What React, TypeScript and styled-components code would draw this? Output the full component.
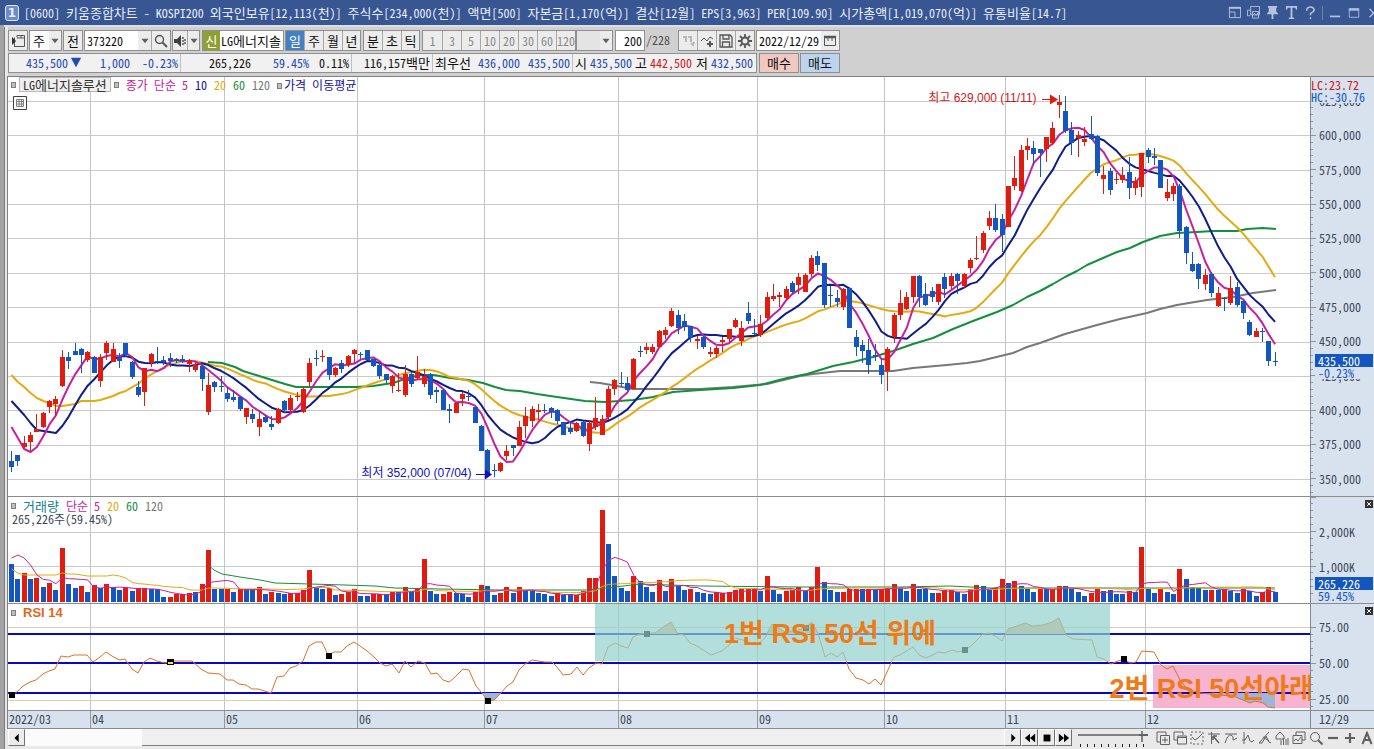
import React from "react";
import styled, { createGlobalStyle, css } from "styled-components";

const MONO = '"Noto Sans Mono CJK KR", "Noto Sans CJK KR", monospace';
const SANS = '"Liberation Sans", "Noto Sans CJK KR", sans-serif';

const RED = "#e01c10";
const BLUE = "#1456c0";
const MAGENTA = "#c8209c";
const NAVY = "#101c8c";
const AMBER = "#e4aa10";
const GREEN = "#14903c";
const GRAY = "#787878";

/* Each bar: colour, high, body top, body bottom, low */
const CANDLES = `
b451,461,467,472 b455,455,461,466 r436,443,447,448 r432,435,442,452 r414,429,432,432 r412,413,427,428 r400,401,407,413 r396,399,404,417 r350,357,386,387 b352,357,361,369
b343,351,355,355 b348,349,355,373 r351,352,360,362 b356,357,373,373 r354,357,381,387 r341,343,353,360 r343,349,362,362 b353,357,361,368 b343,343,355,357 b361,362,377,379
b381,387,395,397 r368,368,392,406 r353,354,363,367 b347,361,362,364 b356,360,362,365 b353,358,361,367 b358,359,361,363 b355,359,361,363 r359,360,364,372 r362,365,370,372
b365,366,379,391 r373,385,412,415 b381,382,387,392 b376,386,387,392 b387,393,399,402 b390,397,400,402 b396,397,409,411 r408,408,417,424 b409,414,419,423 r411,419,427,436
b415,417,422,423 b416,424,427,430 r408,409,423,424 b400,401,410,413 r395,398,410,411 r392,396,397,401 r387,389,412,413 r358,363,382,386 b350,358,359,366 r350,356,357,362
b357,357,375,380 r367,368,375,377 b360,363,369,373 r355,356,365,367 r349,350,354,363 b352,354,355,359 b350,350,360,360 b359,359,366,367 b363,365,376,379 b374,374,380,383
r375,376,386,393 r373,390,391,392 r365,374,395,397 b372,374,384,387 r356,372,378,380 r369,376,384,387 b373,374,395,399 b387,390,392,403 b389,390,410,410 b404,409,411,423
r402,403,413,413 r392,394,399,406 b390,396,397,401 b407,407,423,423 b425,426,451,451 b449,450,474,477 b464,470,471,477 r462,463,471,472 r445,451,456,460 b445,445,448,456
r421,427,446,446 r407,416,426,438 r406,409,421,427 r404,410,412,420 b404,410,411,413 b407,408,412,418 b409,410,421,424 b422,422,435,435 b421,428,432,434 r422,423,431,432
b421,422,436,437 r420,423,444,451 r397,418,427,430 r415,419,435,435 r386,389,417,420 r379,380,389,395 b372,383,384,387 b377,383,390,391 r358,359,389,389 b346,351,352,357
r343,347,350,354 r344,347,352,354 r330,331,347,347 r327,330,335,339 r308,311,326,327 b310,315,328,334 b314,321,327,331 b326,326,338,342 r336,339,341,349 b336,337,347,349
r347,352,354,357 r346,348,354,358 r337,340,342,352 r329,329,339,343 r318,320,327,328 r321,328,341,346 b302,313,321,324 b319,333,334,335 r315,324,335,337 r292,297,318,320
r284,296,299,301 r292,295,297,307 r286,289,298,300 b281,283,292,294 r273,277,285,294 r273,275,292,292 r255,258,274,277 b251,256,265,271 b263,263,305,308 b286,295,296,307
b290,298,302,307 r288,289,307,310 b287,288,328,328 b330,337,347,356 b340,345,351,363 b339,350,365,374 b344,355,357,361 b358,365,375,384 r347,349,371,391 r313,315,337,343
r290,303,315,320 r292,297,309,310 r276,276,297,303 b275,276,297,307 b283,294,305,306 b287,291,297,302 r284,284,302,305 b273,277,289,298 r273,276,286,289 b273,274,281,294
r273,274,286,288 r258,260,268,273 r236,258,259,260 r231,233,250,253 r211,218,226,230 b204,218,230,232 b214,219,235,252 r186,186,227,227 r156,178,186,190 r145,150,191,192
r138,146,150,160 b141,148,154,165 b149,149,153,177 r137,137,149,162 r122,128,143,145 r95,102,105,118 b96,111,131,133 b122,130,143,155 r131,135,138,157 r127,139,142,146
b116,134,139,140 b135,136,173,176 r166,175,179,194 b168,171,190,195 r173,179,180,184 r167,175,180,183 b157,172,188,199 r177,181,188,195 r153,153,187,197 b148,150,157,163
b148,156,158,165 b160,160,188,188 r179,192,198,201 r183,186,194,201 b184,186,231,238 b226,227,253,264 b252,264,271,272 b263,264,279,289 r269,275,284,290 b272,274,293,297
r287,293,306,307 b297,298,299,311 r276,288,303,305 b282,287,305,307 b300,301,313,319 b320,322,335,336 r328,331,337,337 b328,331,332,342 b341,341,361,366 b352,361,362,366`
  .trim()
  .split(/\s+/)
  .map((t) => {
    const [hi, top, bot, lo] = t.slice(1).split(",").map(Number);
    return { up: t[0] === "r", hi, top, bot, lo, close: t[0] === "r" ? top : bot };
  });

/* Volume bars: colour and height in thirds of a unit */
const VOLUMES = `
b113 b68 r87 b68 r71 b45 r56 b35 r161 b53 b41 r47 b29 r50 b41 r53 b44 b35 r44 b32 r41 r41 b38 b38 b14 r14 r23 r25 r27 b29
r55 r155 b38 b38 r38 b29 r38 b38 b38 r44 b25 r29 b26 b23 r26 r26 r35 r95 b41 b38 r41 b20 r23 r29 r38 b17 b17 r23 r23 b23
r29 b29 r44 b29 r41 r128 b32 b23 r23 r29 b26 b25 b14 r29 r50 b47 b20 r26 r44 b26 r44 b32 b32 b26 b23 b17 r26 b20 b23 r20
r32 r71 r73 r275 b173 b77 b41 b32 r77 b62 b44 b29 r65 b32 r68 b47 b35 r38 b29 b26 b23 r29 r26 r29 r35 r38 r38 r41 b32 r77
b35 b23 r32 r35 r46 b32 r45 r104 b59 b35 b29 r29 r38 r38 b38 r38 b35 r40 r41 r53 b41 b32 r53 b38 b38 b27 r26 r35 r35 b29
b23 r38 r50 b47 b35 r41 r68 b56 r62 b47 b38 b29 r43 b39 r38 r47 b47 b38 b29 b17 r26 r38 b32 b35 b23 b23 r32 b29 r164 b41
b26 r39 b29 b23 r98 b68 b44 b43 b35 r35 b35 r39 b32 b26 r38 b32 b17 r29 r46 b29`
  .trim()
  .split(/\s+/)
  .map((t) => ({ up: t[0] === "r", h: Number(t.slice(1)) / 3 }));

const VOL_BASE = 602;
const barX = (i: number) => 11.5 + i * 6.35;

/* Rolling mean; the seed covers the bars whose window starts before the first one shown */
const rolling = (values: number[], n: number, seed: number[]) =>
  values
    .map((_, i) => {
      const y = i < n - 1 ? seed[i] : values.slice(i - n + 1, i + 1).reduce((a, b) => a + b, 0) / n;
      return `${barX(i).toFixed(1)},${y.toFixed(1)}`;
    })
    .join(" ");

const closes = CANDLES.map((c) => c.close);
const volTops = VOLUMES.map((v) => VOL_BASE - v.h);

const MA5 = rolling(closes, 5, [427, 438, 449, 452]);
const MA10 = rolling(closes, 10, [401, 408, 415, 423, 430, 431, 432, 433, 426]);
const MA20 = rolling(closes, 20, [375, 382, 387, 393, 398, 401, 403, 406, 406, 405, 404, 401, 401, 401, 400, 398, 396, 393, 391]);
const MA60 =
  "208,362 222,363 235,367 243,371 256,375 272,380 285,384 296,387 310,387 340,387 356,387 373,386 393,383 405,379 420,375 434,375 450,378 468,380 483,383 495,387 506,390 520,391 537,394 557,397 585,401 605,402 633,400 653,397 673,392 700,390 733,388 760,385 787,378 807,374 833,366 853,362 873,357 893,351 913,344 933,338 953,329 973,321 997,312 1013,305 1027,297 1040,291 1053,284 1065,277 1077,271 1087,265 1103,258 1117,252 1130,248 1143,242 1160,236 1177,233 1197,232 1213,231 1237,231 1247,229 1263,228 1276,229";
const MA120 =
  "590,382 600,383 617,386 633,389 700,389 733,387 767,384 800,376 813,374 840,371 893,371 913,368 947,365 967,363 980,361 1013,353 1027,347 1040,343 1065,334 1097,325 1120,319 1147,313 1160,309 1177,305 1207,300 1233,297 1253,293 1276,290";

const VMA5 = rolling(volTops, 5, [558, 555, 558, 565]);
const VMA20 = rolling(volTops, 20, [569, 573, 575, 575, 575, 575, 575, 575, 573, 574, 574, 575, 576, 576, 576, 576, 575, 576, 578]);
const VMA60 =
  "208,565 214,570 222,574 240,577 260,580 275,583 310,584 345,585 375,586 395,588 440,589 500,590 590,590 615,587 640,584 700,586 800,587 900,587 950,586 990,588 1100,588 1275,588";

const RSI =
  "11,693 17,692 23,686 30,682 36,680 43,674 49,671 55,669 61,656 68,657 74,655 87,655 93,662 100,657 106,652 112,656 119,660 125,659 132,669 138,673 144,662 150,658 157,661 165,663 170,661 192,661 201,669 208,673 220,674 227,680 233,680 239,684 246,685 252,689 258,689 271,693 277,677 284,676 290,668 296,666 303,661 309,646 316,642 322,642 328,655 334,652 341,652 347,646 354,642 360,646 367,651 374,657 380,663 386,666 392,664 399,673 405,661 411,667 418,661 425,663 431,674 437,673 443,680 449,682 454,678 463,669 469,670 476,686 482,693 488,701 494,700 500,694 507,686 513,682 519,670 525,664 532,660 538,661 545,662 552,662 557,667 563,675 571,674 577,667 583,675 589,668 596,663 602,664 608,647 615,643 621,646 628,648 633,637 640,634 647,633 655,633 663,627 671,622 678,634 684,635 690,643 697,646 703,650 711,655 722,651 729,645 735,638 743,640 750,643 757,645 765,638 772,624 785,632 798,630 805,628 812,622 818,633 825,657 831,653 837,657 843,652 849,669 856,678 863,680 869,684 875,679 881,685 887,672 894,657 900,655 913,647 919,655 926,658 933,655 938,652 945,653 952,650 958,652 965,650 972,645 983,634 989,633 997,637 1002,641 1008,629 1017,626 1025,623 1033,626 1043,625 1052,622 1059,618 1066,635 1073,639 1092,640 1097,657 1104,659 1111,664 1118,661 1124,659 1130,663 1136,662 1142,651 1154,652 1161,665 1167,669 1173,666 1180,680 1187,689 1200,693 1210,694 1218,695 1233,696 1243,700 1250,703 1255,701 1263,703 1268,707 1275,708";

const MONTHS = [
  { label: "2022/03", x: 8 },
  { label: "04", x: 90 },
  { label: "05", x: 224 },
  { label: "06", x: 357 },
  { label: "07", x: 484 },
  { label: "08", x: 618 },
  { label: "09", x: 757 },
  { label: "10", x: 884 },
  { label: "11", x: 1005 },
  { label: "12", x: 1145 },
];
const PRICES = ["625,000", "600,000", "575,000", "550,000", "525,000", "500,000", "475,000", "450,000", "425,000", "400,000", "375,000", "350,000"];

const Global = createGlobalStyle`
  * { box-sizing: border-box; }
  body { margin: 0; background: #d0d0d0; }
  button, input, select { font: inherit; color: inherit; margin: 0; padding: 0; border: 0; background: none; border-radius: 0; }
  h1 { margin: 0; font: inherit; }
`;

const Window = styled.main`
  display: flex;
  flex-direction: column;
  min-height: 100vh;
  font: 12px/14px ${MONO};
  color: #101010;
  background: #d0d0d0;
`;
const Hangul = styled.span`
  font-size: 13px;
`;

const TitleBar = styled.header`
  display: flex;
  align-items: center;
  height: 25px;
  padding-left: 5px;
  background: #385692;
  color: #e8eefa;
  white-space: pre;
  overflow: hidden;
`;
const WindowNumber = styled.span`
  width: 14px;
  height: 16px;
  margin-right: 5px;
  border: 1px solid #dfe8f8;
  border-radius: 3px;
  background: #6d8cc4;
  font: bold 12px/14px "DejaVu Sans", sans-serif;
  text-align: center;
`;
const Title = styled.h1`
  flex: 1;
`;
const WindowTools = styled.div`
  display: flex;
  align-items: center;
  gap: 4px;
  margin-right: -6px;
  color: #b4c2de;
`;
const ToolButton = styled.button`
  display: flex;
  width: 15px;
  height: 15px;
  align-items: center;
  justify-content: center;
  flex: none;
`;
const Separator = styled.i`
  width: 1px;
  height: 14px;
  background: #6d86b6;
`;

const Body = styled.div`
  display: flex;
  flex-direction: column;
  flex: 1;
  border-left: 4px solid #a2a2a2;
  box-shadow: inset 1px 0 #7c7c7c, inset 4px 0 #e8e8e8;
`;

const Toolbars = styled.div`
  display: flex;
  flex-direction: column;
  flex: none;
  gap: 2px;
  height: 51px;
  padding: 3px 0 0 4px;
  border-top: 2px solid #dcdfe4;
`;
const Bar = styled.div`
  display: flex;
  flex: none;
  height: 21px;
`;
const Group = styled.div<{ $gap?: number }>`
  display: flex;
  flex: none;
  height: 21px;
  margin-right: ${(p) => p.$gap ?? 1}px;
  border: 1px solid #8f8f8f;
  background: #ececec;
`;
const Cell = styled.button<{ $w?: number; $on?: boolean; $dim?: boolean; $ko?: boolean }>`
  display: flex;
  align-items: center;
  justify-content: center;
  flex: none;
  width: ${(p) => p.$w ?? 19}px;
  font-size: ${(p) => (p.$ko ? 13 : 12)}px;
  line-height: 19px;
  color: ${(p) => (p.$on ? "#fff" : p.$dim ? "#8a8a8a" : "#101010")};
  background: ${(p) => (p.$on ? "#4580c4" : "#ececec")};
  & + & {
    border-left: 1px solid #a8a8a8;
  }
  svg {
    color: #565656;
  }
`;
const Field = styled.input<{ $w: number; $right?: boolean }>`
  width: ${(p) => p.$w}px;
  padding: 0 2px;
  background: #fff;
  text-align: ${(p) => (p.$right ? "right" : "left")};
`;
const Picker = styled.select<{ $w: number }>`
  width: ${(p) => p.$w}px;
  padding: 0 3px;
  appearance: none;
  background: #fafafa;
  font-size: 13px;
  &:disabled {
    background: #e4e4e4;
    opacity: 1;
  }
`;
const Badge = styled.span`
  width: 17px;
  background: #8ea030;
  color: #fff;
  font-size: 13px;
  line-height: 19px;
  text-align: center;
`;
const StockName = styled.span`
  width: 63px;
  padding-left: 1px;
  background: #fff;
  line-height: 19px;
  white-space: nowrap;
  overflow: hidden;
`;
const Total = styled.span`
  width: 32px;
  line-height: 20px;
  color: #505050;
`;

const Quote = styled.div`
  display: flex;
  flex: none;
  width: 749px;
  height: 20px;
  margin-right: 2px;
  border: 1px solid #8f8f8f;
  background: #f1f1f2;
  line-height: 18px;
`;
const Value = styled.span<{ $w: number; $c?: string; $line?: boolean }>`
  flex: none;
  width: ${(p) => p.$w}px;
  color: ${(p) => p.$c ?? "#101010"};
  text-align: right;
  white-space: nowrap;
  ${(p) =>
    p.$line &&
    css`
      padding-right: 2px;
      border-right: 1px solid #c0c0c4;
    `}
`;
const Order = styled.button<{ $bg: string }>`
  width: 40px;
  height: 20px;
  margin-right: 1px;
  border: 1px solid #8f8f8f;
  background: ${(p) => p.$bg};
  font-size: 13px;
`;

const Chart = styled.section`
  display: flex;
  flex-direction: column;
  flex: 1;
  margin-left: 3px;
  border-top: 1px solid #808080;
  border-left: 1px solid #808080;
  color: #404858;
`;
const Panel = styled.div<{ $h: number; $last?: boolean }>`
  display: grid;
  grid-template: minmax(0, 1fr) / minmax(0, 1fr) 64px;
  flex: ${(p) => p.$h} 0 ${(p) => p.$h}px;
  min-height: 0;
  border-bottom: ${(p) => (p.$last ? "0" : "1px solid #8c8c8c")};
`;
const Plot = styled.div`
  position: relative;
  overflow: hidden;
  background: #fff;
`;
const Canvas = styled.svg`
  position: absolute;
  inset: 0;
  width: 100%;
  height: 100%;
`;
const Legend = styled.div<{ $x: number; $y: number }>`
  position: absolute;
  left: ${(p) => p.$x}px;
  top: ${(p) => p.$y}px;
  display: flex;
  align-items: center;
  gap: 7px;
  line-height: 15px;
  white-space: nowrap;
`;
const Square = styled.i`
  display: inline-block;
  width: 5px;
  height: 6px;
  border: 1px solid #808080;
  background: #c0c0c0;
`;
const Name = styled.span`
  padding: 0 3px;
  margin: 0 -4px;
  border: 1px solid #b8b8b8;
  background: #efefef;
  color: #303030;
  line-height: 13px;
`;
const Ink = styled.span<{ $c: string; $large?: boolean; $bold?: boolean }>`
  color: ${(p) => p.$c};
  ${(p) =>
    p.$bold &&
    css`
      font: bold 13px/15px ${SANS};
    `}
  ${Square} {
    margin-right: 2px;
    vertical-align: 1px;
  }
`;
const GridButton = styled.button`
  position: absolute;
  left: 5px;
  top: 19px;
  display: flex;
`;
const Note = styled.span<{ $c: string; $right: string; $top: string }>`
  position: absolute;
  right: ${(p) => p.$right};
  top: ${(p) => p.$top};
  font: 12px/15px ${SANS};
  color: ${(p) => p.$c};
  white-space: nowrap;
`;
const Callout = styled.strong<{ $left: string; $top: string }>`
  position: absolute;
  left: ${(p) => p.$left};
  top: ${(p) => p.$top};
  font: bold 27px/30px ${SANS};
  color: #f07a14;
  white-space: nowrap;
`;

const Axis = styled.div<{ $pad: number; $row?: number }>`
  position: relative;
  display: grid;
  grid-auto-rows: ${(p) => (p.$row ? `${p.$row}px` : "1fr")};
  align-items: center;
  padding: ${(p) => p.$pad}px 0 0 8px;
  border-left: 1px solid #808890;
  background: #d7e2ee;
  overflow: hidden;
`;
const AxisTag = styled.span<{ $top: string; $c?: string; $fill?: boolean; $left?: number }>`
  position: absolute;
  top: ${(p) => p.$top};
  left: ${(p) => p.$left ?? 4}px;
  right: 1px;
  padding-left: ${(p) => (p.$left === 0 ? 0 : 3)}px;
  line-height: 13px;
  color: ${(p) => (p.$fill ? "#fff" : p.$c ?? BLUE)};
  background: ${(p) => (p.$fill ? BLUE : "#d7e2ee")};
`;
const ClosePanel = styled.button`
  position: absolute;
  right: 1px;
  top: 3px;
  display: flex;
`;

const Dates = styled.div`
  display: grid;
  grid-template-columns: minmax(0, 1fr) 64px;
  flex: none;
  height: 19px;
  border-top: 1px solid #8c8c8c;
  border-bottom: 1px solid #8c8c8c;
  background: #d7e2ee;
  line-height: 16px;
`;
const Months = styled.div`
  display: grid;
  grid-template-columns: 82fr 134fr 133fr 127fr 134fr 139fr 127fr 121fr 140fr 165fr;
`;
const Month = styled.span`
  padding-left: 1px;
  & + & {
    border-left: 1px solid #9098a0;
  }
`;
const LastDate = styled.span`
  padding-left: 8px;
  border-left: 1px solid #808890;
`;

const Footer = styled.footer`
  display: flex;
  flex: none;
  height: 20px;
  margin-left: 4px;
  background: #e9e9e9;
`;
const ScrollTrack = styled.div`
  display: flex;
  flex: 1;
  height: 17px;
  border-bottom: 1px solid #808080;
  background: #f0f0f0;
`;
const PushButton = styled.button`
  display: flex;
  align-items: center;
  justify-content: center;
  flex: none;
  width: 17px;
  height: 17px;
  border-top: 1px solid #fff;
  border-left: 1px solid #fff;
  border-right: 1px solid #707070;
  border-bottom: 1px solid #707070;
  background: #ececec;
`;
const Trough = styled.div`
  width: 12%;
  height: 17px;
  background: #fbfbfb;
`;
const Zoom = styled.div`
  width: 70px;
  margin: 0 7px 0 6px;
  height: 19px;
  background: repeating-linear-gradient(90deg, #202020 0 1px, transparent 1px 7px) 2px 15px / 66px 3px no-repeat;
`;
const Range = styled.input`
  display: block;
  appearance: none;
  width: 70px;
  height: 14px;
  background: linear-gradient(#808080, #808080) 0 5px / 62px 2px no-repeat;
  &::-webkit-slider-thumb {
    appearance: none;
    width: 9px;
    height: 11px;
    background: linear-gradient(#606060, #606060) 0 3px / 9px 2px no-repeat, linear-gradient(#808080, #808080) 2px 0 / 2px 11px no-repeat;
  }
`;
const Tools = styled.div`
  display: flex;
  align-items: center;
  flex: none;
  gap: 2px;
  height: 18px;
  color: #606060;
`;

const Mixed = ({ children }: { children: string }) => (
  <>{children.split(/([가-힣]+)/).map((part, i) => (i % 2 ? <Hangul key={i}>{part}</Hangul> : part))}</>
);

const Svg = ({ s = 14, children }: { s?: number; children: React.ReactNode }) => (
  <svg width={s} height={s} viewBox="0 0 14 14" fill="none" stroke="currentColor" strokeWidth="1" aria-hidden="true">
    {children}
  </svg>
);
const Caret = () => (
  <Svg s={10}>
    <path d="M2 4h10l-5 6z" fill="#606060" stroke="none" />
  </Svg>
);
const Magnifier = () => (
  <Svg>
    <circle cx="5.5" cy="5.5" r="4" strokeWidth="1.4" />
    <path d="M8.5 8.5l4.5 4.5" strokeWidth="2" />
  </Svg>
);

const titleIcons: [string, React.ReactNode][] = [
  ["분리", <><path d="M1.5 1.5h12v11h-12zM1.5 6.5h6v6" /><path d="M1 2h13" strokeWidth="2" /></>],
  ["복사", <><path d="M.5 4.500v6h3M.5 4.500h3M4 .5h9.500v9H4z" /><path d="M6 6h6.500v7H6zM6 10l2-2 2 2 2-3" /></>],
  ["고정", <path d="M2 0h10v2h-1v4l2 2v1H8v5H6V9H1V8l2-2V2H2z" fill="currentColor" stroke="none" />],
  ["글꼴", <path d="M1 0h12v4h-1l-1-2H8v10l2 1v1H4v-1l2-1V2H3L2 4H1z" fill="currentColor" stroke="none" />],
  ["도움말", <path d="M3 5V3.500Q4 1 7 1T11 4Q11 6 7 8v2M7 12v2" strokeWidth="1.6" />],
];

const chartTools: [string, React.ReactNode][] = [
  ["차트 추가", <><path d="M4 11H1V1h9v3" /><path d="M4.500 4.500h9v9h-9zM9 6v6M6 9h6" /></>],
  ["차트 복사", <><path d="M4 9H1V1h9v3" /><path d="M4.500 5h9v8h-9zM4.500 6.500h9" /></>],
  ["지표", <><path d="M1 1h12v12H1z" strokeDasharray="2 2" /><path d="M2 6l3 3 3-2 4-4" /></>],
  ["십자선", <><path d="M1 3h12M4.500 1v12" /><path d="M6 5h4M6 5v4M6 5l6 7" strokeWidth="1.500" /></>],
  ["추세선", <path d="M1 3h12M1 12q3-9 6-8t2 5l4-2" />],
  ["피크", <path d="M3 1v12M1 9l3 0 3-5 2 6 2 1 2-2" />],
  ["각도", <path d="M1 12L11 1M1 12h3l4-7 3 6 2 1M5 6l6 4" />],
  ["도형", <><path d="M1 5l4-4 4 4v3H1z" /><path d="M6 9v5M8.500 7v7M11 8v6M13 7v7" /></>],
  ["창 배열", <><path d="M4 4V1h9v8h-3" /><path d="M1 4.500h9v8H1zM2 10l2-2 2 2 3-4" /></>],
  ["돋보기", <><circle cx="6" cy="6" r="4.500" /><path d="M9 9l4.500 4.500" strokeWidth="2" /></>],
  ["축소", <path d="M2 7h10" strokeWidth="2.200" />],
  ["확대", <path d="M2 7h10M7 2v10" strokeWidth="2.200" />],
  ["글자", <path d="M2.500 13L7 2l4.500 11M4 9h6" strokeWidth="2" />],
];

const VerticalGrid = ({ y1, y2 }: { y1: number; y2: number }) => (
  <>
    {MONTHS.slice(1).map((m) => (
      <path key={m.label} d={`M${m.x + 0.5} ${y1}V${y2}`} stroke="#c4c4c4" />
    ))}
  </>
);

const TickMarks = styled.svg`
  position: absolute;
  left: 0;
  top: 0;
  width: 6px;
  height: 100%;
`;
const AxisTicks = ({ h, from, step, count, minor }: { h: number; from: number; step: number; count: number; minor: number }) => (
  <TickMarks viewBox={`0 0 6 ${h}`} preserveAspectRatio="none" shapeRendering="crispEdges" stroke="#8a94a0">
    {Array.from({ length: count * minor }, (_, i) => (
      <path key={i} d={`M0 ${from + (i * step) / minor}h${i % minor ? 2 : 5}`} />
    ))}
  </TickMarks>
);

const CloseIcon = () => (
  <svg width="8" height="8" viewBox="0 0 8 8">
    <path d="M0 0h8v8H0z" fill="#303030" />
    <path d="M2 2l4 4M6 2l-4 4" stroke="#fff" />
  </svg>
);

export default function App() {
  return (
    <Window>
      <Global />
      <TitleBar>
        <WindowNumber>1</WindowNumber>
        <Title>
          <Mixed>
            {"[0600] 키움종합차트 - KOSPI200 외국인보유[12,113(천)] 주식수[234,000(천)] 액면[500] 자본금[1,170(억)] 결산[12월] EPS[3,963] PER[109.90] 시가총액[1,019,070(억)] 유통비율[14.7]"}
          </Mixed>
        </Title>
        <WindowTools>
          {titleIcons.map(([label, icon]) => (
            <ToolButton key={label} aria-label={label}>
              <Svg s={13}>{icon}</Svg>
            </ToolButton>
          ))}
          <Separator />
          <ToolButton aria-label="최소화"><Svg s={12}><path d="M1 11h12" strokeWidth="2" /></Svg></ToolButton>
          <ToolButton aria-label="최대화"><Svg s={12}><path d="M1.500 2h11v10h-11z" /><path d="M1 3h12" strokeWidth="2.500" /></Svg></ToolButton>
          <ToolButton aria-label="닫기"><Svg s={12}><path d="M3 2l9 10M12 2L3 12" strokeWidth="1.500" /></Svg></ToolButton>
        </WindowTools>
      </TitleBar>

      <Body>
        <Toolbars>
          <Bar>
            <Group>
              <Cell $w={18} aria-label="메뉴">
                <Svg>
                  <path d="M6 1.500h7.500v11H3M6 1.500v2M3.500 3.500v9M10 1v3M6 4h8" />
                  <path d="M1 3l4 4-4 4z" fill="#303030" stroke="none" />
                </Svg>
              </Cell>
            </Group>
            <Group>
              <Picker $w={19} aria-label="종류"><option>주</option></Picker>
              <Cell $w={12} tabIndex={-1} aria-label="종류 열기"><Caret /></Cell>
            </Group>
            <Group><Cell $ko $w={18}>전</Cell></Group>
            <Group>
              <Field $w={53} aria-label="종목코드" defaultValue="373220" />
              <Cell $w={13} aria-label="종목 목록"><Caret /></Cell>
              <Cell aria-label="종목 검색"><Magnifier /></Cell>
            </Group>
            <Group $gap={2}>
              <Cell $w={14} aria-label="음성">
                <Svg>
                  <path d="M1 5h3l4-4v12L4 9H1z" fill="#404040" stroke="none" />
                  <path d="M10 3v8M12 5v5" strokeDasharray="2 1" strokeWidth="1.500" />
                </Svg>
              </Cell>
              <Cell $w={12} aria-label="음성 설정"><Caret /></Cell>
            </Group>
            <Group>
              <Badge>신</Badge>
              <StockName><Mixed>LG에너지솔</Mixed></StockName>
            </Group>
            <Group $gap={2}>
              <Cell $ko $on $w={18}>일</Cell>
              <Cell $ko>주</Cell>
              <Cell $ko>월</Cell>
              <Cell $ko $w={18}>년</Cell>
            </Group>
            <Group $gap={2}>
              <Cell $ko $w={18}>분</Cell>
              <Cell $ko>초</Cell>
              <Cell $ko $w={18}>틱</Cell>
            </Group>
            <Group $gap={0}>
              {["1", "3", "5", "10", "20", "30", "60", "120"].map((n) => (
                <Cell key={n} $dim>{n}</Cell>
              ))}
            </Group>
            <Group $gap={2}>
              <Picker $w={23} disabled aria-label="사용자 주기"><option> </option></Picker>
              <Cell $w={12} $dim aria-label="주기 열기"><Caret /></Cell>
            </Group>
            <Group>
              <Field $w={28} $right aria-label="표시 개수" defaultValue="200" />
            </Group>
            <Total>/228</Total>
            <Group>
              <Cell $w={18} $dim aria-label="되돌리기">
                <Svg><path d="M2 3h3v5M7 3h3v5M10 9l2 2 1-3" stroke="#b8b8b8" strokeWidth="2" /></Svg>
              </Cell>
              <Cell aria-label="지표 추가">
                <Svg><path d="M1 7l3-3 3 3 3-4 3 2" /><path d="M10 7v6M7 10h6" strokeWidth="2" /></Svg>
              </Cell>
              <Cell aria-label="저장">
                <Svg><path d="M1 1h10l2 2v10H1zM4 1v4h6V1M3.500 13V8h7v5" strokeWidth="1.300" /></Svg>
              </Cell>
              <Cell aria-label="설정">
                <Svg>
                  <circle cx="7" cy="7" r="3.500" strokeWidth="2" />
                  <path d="M7 0v3M7 11v3M0 7h3M11 7h3M2 2l2 2M10 10l2 2M12 2l-2 2M4 10l-2 2" strokeWidth="1.800" />
                </Svg>
              </Cell>
            </Group>
            <Group>
              <Field $w={64} aria-label="날짜" defaultValue="2022/12/29" />
              <Cell $w={18} aria-label="달력">
                <Svg><path d="M1.500 2.500h11v9h-11zM5 4v3M9 4v3" /><path d="M1 3h12" strokeWidth="2.500" /></Svg>
              </Cell>
            </Group>
          </Bar>
          <Bar>
            <Quote>
              <Value $w={59} $c="#2348b0">435,500</Value>
              <Value $w={14} $c="#2348b0">
                <Svg s={12}><path d="M1 2h12l-6 11z" fill="#2348b0" stroke="none" /></Svg>
              </Value>
              <Value $w={48} $c="#2348b0">1,000</Value>
              <Value $w={51} $c="#2348b0" $line>-0.23%</Value>
              <Value $w={70}>265,226</Value>
              <Value $w={58} $c="#2348b0">59.45%</Value>
              <Value $w={43} $line>0.11%</Value>
              <Value $w={81} $line><Mixed>116,157백만</Mixed></Value>
              <Value $w={38}><Mixed>최우선</Mixed></Value>
              <Value $w={49} $c="#2348b0">436,000</Value>
              <Value $w={53} $c="#2348b0" $line>435,500</Value>
              <Value $w={14}><Mixed>시</Mixed></Value>
              <Value $w={45} $c="#2348b0">435,500</Value>
              <Value $w={15}><Mixed>고</Mixed></Value>
              <Value $w={45} $c="#d01818">442,500</Value>
              <Value $w={16}><Mixed>저</Mixed></Value>
              <Value $w={45} $c="#2348b0">432,500</Value>
            </Quote>
            <Order $bg="#f2c8c2">매수</Order>
            <Order $bg="#bcd4ee">매도</Order>
          </Bar>
        </Toolbars>

        <Chart>
          <Panel $h={420}>
            <Plot>
              <Canvas viewBox="8 77 1302 419" preserveAspectRatio="none" fill="none">
                <g shapeRendering="crispEdges">
                  {PRICES.map((p, k) => (
                    <path key={p} d={`M8 ${Math.round(101 + k * 34.36) + 0.5}H1310`} stroke="#cacaca" />
                  ))}
                  <VerticalGrid y1={77} y2={496} />
                </g>
                <g strokeWidth="2" strokeLinejoin="round">
                  <polyline points={MA120} stroke={GRAY} />
                  <polyline points={MA60} stroke={GREEN} />
                  <polyline points={MA20} stroke={AMBER} />
                  <polyline points={MA10} stroke={NAVY} />
                  <polyline points={MA5} stroke={MAGENTA} />
                </g>
                <g shapeRendering="crispEdges">
                  {CANDLES.map((c, i) => {
                    const x = Math.floor(barX(i));
                    return (
                      <g key={i} fill={c.up ? RED : BLUE}>
                        <rect x={x} y={c.hi} width="1" height={Math.max(1, c.lo - c.hi)} />
                        <rect x={x - 2} y={c.top} width="5" height={Math.max(1, c.bot - c.top)} />
                      </g>
                    );
                  })}
                </g>
                <path d="M1042 99.500h9" stroke={RED} />
                <path d="M1050 94.500v10l8-5z" fill={RED} />
                <path d="M476 474.500h9" stroke="#1010c0" />
                <path d="M485 469.500v10l7-5z" fill="#1010c0" />
              </Canvas>
              <Legend $x={3} $y={0}>
                <Square />
                <Name><Mixed>LG에너지솔루션</Mixed></Name>
                <Square />
                <Ink $c={MAGENTA}>종가 단순 5</Ink>
                <Ink $c="#1010a8">10</Ink>
                <Ink $c={AMBER}>20</Ink>
                <Ink $c={GREEN}>60</Ink>
                <Ink $c={GRAY}>120</Ink>
                <Ink $c="#1010a8"><Square />가격 이동평균</Ink>
              </Legend>
              <GridButton aria-label="데이터 보기">
                <svg width="14" height="14" viewBox="0 0 14 14" fill="#fff" stroke="#404040">
                  <path d="M.5.5h13v13H.5z" />
                  <path d="M3.500 3.500h7v7h-7zM3.500 5.500h7M3.500 8h7M6 3.500v7M8.500 3.500v7" stroke="#808080" />
                </svg>
              </GridButton>
              <Note $c="#d01818" $right="21%" $top="3.300%">최고 629,000 (11/11)</Note>
              <Note $c="#1010c0" $right="64.400%" $top="92.800%">최저 352,000 (07/04)</Note>
            </Plot>
            <Axis $pad={7}>
              <AxisTicks h={419} from={24} step={34.36} count={12} minor={5} />
              {PRICES.map((p) => (
                <span key={p}>{p}</span>
              ))}
              <AxisTag $top="1px" $left={0} $c="#d01818">LC:23.72</AxisTag>
              <AxisTag $top="13px" $left={0}>HC:-30.76</AxisTag>
              <AxisTag $top="289px">-0.23%</AxisTag>
              <AxisTag $top="277px" $fill>435,500</AxisTag>
            </Axis>
          </Panel>

          <Panel $h={107}>
            <Plot>
              <Canvas viewBox="8 497 1302 106" preserveAspectRatio="none" fill="none">
                <g shapeRendering="crispEdges">
                  <path d="M8 532.500H1310M8 566.500H1310" stroke="#cacaca" />
                  <VerticalGrid y1={497} y2={603} />
                  {VOLUMES.map((v, i) => (
                    <rect key={i} x={Math.floor(barX(i)) - 2} y={Math.round(VOL_BASE - v.h)} width="5" height={Math.round(v.h)} fill={v.up ? RED : BLUE} />
                  ))}
                </g>
                <polyline points={VMA60} stroke={GREEN} />
                <polyline points={VMA20} stroke={AMBER} />
                <polyline points={VMA5} stroke={MAGENTA} />
              </Canvas>
              <Legend $x={3} $y={1}>
                <Square />
                <Ink $c="#10808c"><Mixed>거래량</Mixed></Ink>
                <Ink $c={MAGENTA}>단순 5</Ink>
                <Ink $c={AMBER}>20</Ink>
                <Ink $c={GREEN}>60</Ink>
                <Ink $c={GRAY}>120</Ink>
              </Legend>
              <Legend $x={4} $y={14}>265,226주(59.45%)</Legend>
            </Plot>
            <Axis $pad={17} $row={35}>
              <AxisTicks h={106} from={0} step={34.5} count={3} minor={5} />
              <span>2,000K</span>
              <span>1,000K</span>
              <AxisTag $top="92px">59.45%</AxisTag>
              <AxisTag $top="80px" $fill>265,226</AxisTag>
              <ClosePanel aria-label="거래량 닫기"><CloseIcon /></ClosePanel>
            </Axis>
          </Panel>

          <Panel $h={106} $last>
            <Plot>
              <Canvas viewBox="8 604 1302 106" preserveAspectRatio="none" fill="none">
                <defs>
                  <clipPath id="over"><path d="M8 604H1310V634H8z" /></clipPath>
                  <clipPath id="under"><path d="M8 693H1310V710H8z" /></clipPath>
                </defs>
                <g shapeRendering="crispEdges">
                  <VerticalGrid y1={604} y2={710} />
                  <path d="M8 627.500H1310M8 700.500H1310" stroke="#dccfb4" />
                  <path d="M1153 665h157v43H1153z" fill="#f6b4d0" />
                  <path d="M8 634H1310M8 663H1310M8 693H1310" stroke="#0808c4" strokeWidth="2" />
                </g>
                <polygon points={`11,634 ${RSI} 1275,634`} fill="#f0b890" clipPath="url(#over)" />
                <polygon points={`11,693 ${RSI} 1275,693`} fill="#a0b4d8" clipPath="url(#under)" />
                <polyline points={RSI} stroke="#e07028" />
                <g fill="#000">
                  <path d="M9 692h6v6H9zM167 659h7v6h-7zM326 653h6v6h-6zM485 698h6v6h-6zM644 631h6v6h-6zM962 647h6v6h-6zM1121 656h6v6h-6zM803 625h6v6h-6z" />
                  <path d="M168 662h5v2h-5z" fill="#f0e840" />
                </g>
                <path d="M595 604h515v57H595z" fill="#91d1cc" fillOpacity=".7" />
              </Canvas>
              <Legend $x={3} $y={1}>
                <Square />
                <Ink $c="#e0681c" $bold>RSI 14</Ink>
              </Legend>
              <Callout $left="55%" $top="14%">1번 RSI 50선 위에</Callout>
              <Callout $left="84.600%" $top="66%">2번 RSI 50선아래</Callout>
            </Plot>
            <Axis $pad={5} $row={36}>
              <AxisTicks h={106} from={23} step={36} count={3} minor={5} />
              <span>75.00</span>
              <span>50.00</span>
              <span>25.00</span>
              <ClosePanel aria-label="RSI 닫기"><CloseIcon /></ClosePanel>
            </Axis>
          </Panel>

          <Dates>
            <Months>
              {MONTHS.map((m) => (
                <Month key={m.label}>{m.label}</Month>
              ))}
            </Months>
            <LastDate>12/29</LastDate>
          </Dates>
        </Chart>

        <Footer>
          <PushButton aria-label="왼쪽"><Svg s={12}><path d="M9 2v10L4 7z" fill="#000" stroke="none" /></Svg></PushButton>
          <ScrollTrack><Trough /></ScrollTrack>
          <PushButton aria-label="재생"><Svg s={12}><path d="M5 2v10l5-5z" fill="#000" stroke="none" /></Svg></PushButton>
          <PushButton aria-label="뒤로"><Svg s={12}><path d="M7 2v10L1 7zM13 2v10L7 7z" fill="#000" stroke="none" /></Svg></PushButton>
          <PushButton aria-label="정지"><Svg s={12}><path d="M3 3h8v8H3z" fill="#000" stroke="none" /></Svg></PushButton>
          <PushButton aria-label="앞으로"><Svg s={12}><path d="M1 2v10l6-5zM7 2v10l6-5z" fill="#000" stroke="none" /></Svg></PushButton>
          <Zoom><Range type="range" aria-label="배율" defaultValue={100} /></Zoom>
          <Tools>
            {chartTools.map(([label, icon]) => (
              <ToolButton key={label} aria-label={label}><Svg>{icon}</Svg></ToolButton>
            ))}
          </Tools>
        </Footer>
      </Body>
    </Window>
  );
}
